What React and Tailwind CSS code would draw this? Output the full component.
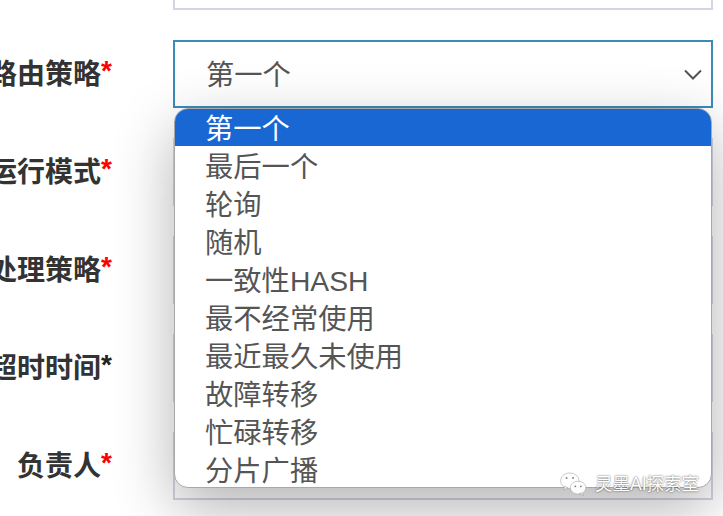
const font = "[font-family:'Liberation_Sans','Noto_Sans_CJK_SC',sans-serif]";

const rows = [
  { label: "路由策略", star: "text-[#ff0000]", focused: true },
  { label: "运行模式", star: "text-[#ff0000]" },
  { label: "处理策略", star: "text-[#ff0000]" },
  { label: "超时时间", star: "text-[#222222]" },
  { label: "负责人", star: "text-[#ff0000]" },
];

const options = ["第一个", "最后一个", "轮询", "随机", "一致性HASH", "最不经常使用", "最近最久未使用", "故障转移", "忙碌转移", "分片广播"];

function Row({ label, star, focused }) {
  return (
    <div className="flex h-[68px] items-center">
      <div className="flex w-[112px] shrink-0 justify-end whitespace-nowrap pt-[2px] text-[28px] font-bold text-[#333333]">
        <span>{label}</span>
        <span className={`-mt-[4px] ${star}`}>*</span>
      </div>
      <div className={`ml-[61px] flex h-full w-[540px] items-center justify-between border-2 bg-white pl-[31px] pr-[9px] ${focused ? "border-[#3a8bba]" : "border-[#d3d6e2]"}`}>
        {focused && (
          <>
            <span className="pt-[2px] text-[28.3px] text-[#555555]">第一个</span>
            <svg width="18" height="11" viewBox="0 0 18 11" fill="none" stroke="#555555" strokeWidth="2">
              <path d="M1 1.5l8 8 8-8" />
            </svg>
          </>
        )}
      </div>
    </div>
  );
}

export default function App() {
  return (
    <div className={`relative h-[516px] w-[723px] overflow-hidden bg-white ${font}`}>
      <div className="flex flex-col gap-[30px]">
        <div className="ml-[173px] h-[10px] w-[540px] border-x-2 border-b-2 border-[#d3d6e2]" />
        {rows.map((r) => (
          <Row key={r.label} {...r} />
        ))}
      </div>

      <div className="absolute left-[174px] top-[108px] h-[380px] w-[538px] overflow-hidden rounded-[14px] border border-[#a8a8a8] bg-white shadow-[0_20px_60px_rgba(0,0,0,0.3)]">
        {options.map((o, i) => (
          <div
            key={o}
            className={`flex items-center whitespace-nowrap pl-[30px] pt-[4px] text-[28.3px] leading-none ${i === 0 ? "h-[37px] bg-[#1967d2] text-white" : "h-[38px] text-[#555555]"}`}
          >
            {o}
          </div>
        ))}
      </div>

      <div className="absolute left-[560px] top-[471px] flex items-center gap-[8px]">
        <svg width="27" height="24" viewBox="0 0 29 26" stroke="#9a9a9a" strokeWidth="0.6" fill="#ffffff" opacity="0.95">
          <ellipse cx="10.5" cy="9.5" rx="10" ry="8.5" />
          <path d="M5 15.5l-1 4 4.5-2.5z" />
          <ellipse cx="19.5" cy="17" rx="8.5" ry="7" />
          <path d="M23.5 22.5l2 3-5-2z" />
          <circle cx="16.5" cy="15.5" r="1" fill="#777777" stroke="none" />
          <circle cx="22.5" cy="15.5" r="1" fill="#777777" stroke="none" />
          <circle cx="7" cy="6.5" r="1" fill="#777777" stroke="none" />
          <circle cx="14" cy="6.5" r="1" fill="#777777" stroke="none" />
        </svg>
        <span className="text-[17.5px] whitespace-nowrap text-white [text-shadow:0_0_2px_rgba(0,0,0,0.75)]">灵墨AI探索室</span>
      </div>
    </div>
  );
}
